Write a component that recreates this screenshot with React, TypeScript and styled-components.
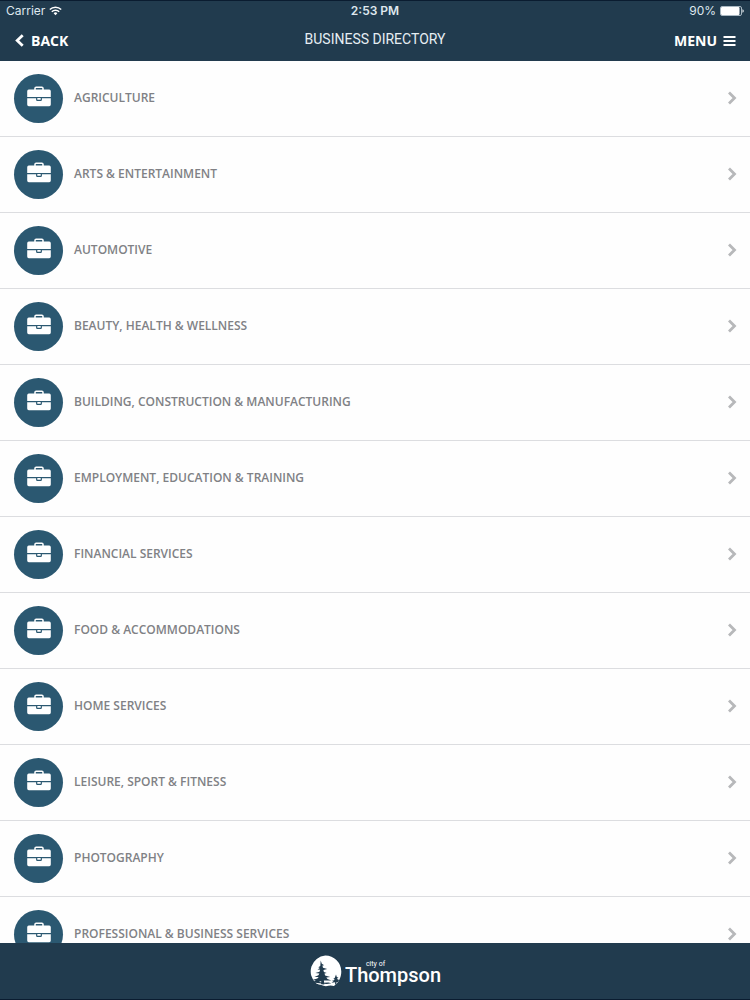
import React from "react";
import styled, { createGlobalStyle } from "styled-components";

const navy = "#213b4e";
const edge = "#0a1c30";

const GlobalStyle = createGlobalStyle`
  *, *::before, *::after { box-sizing: border-box; }
  body { margin: 0; background: #fefefe; font-family: "Open Sans", sans-serif; }
`;

const Screen = styled.div`
  display: flex;
  flex-direction: column;
  height: 100vh;
`;

const Header = styled.header`
  flex: none;
  background: ${navy};
  border-top: 1px solid ${edge};
  color: #fff;
`;

const StatusBar = styled.div`
  display: grid;
  grid-template-columns: 1fr auto 1fr;
  align-items: center;
  height: 20px;
  padding: 0 6px;
  font: 400 12px/20px Inter, sans-serif;
  color: #dfe8ee;
`;

const Cell = styled.div<{ $end?: boolean }>`
  display: flex;
  align-items: center;
  justify-content: ${(p) => (p.$end ? "flex-end" : "flex-start")};
  gap: 4px;
`;

const Clock = styled.time`
  font-weight: 600;
`;

const NavBar = styled.nav`
  display: grid;
  grid-template-columns: 1fr auto 1fr;
  height: 40px;
  padding: 0 14px;
`;

const NavButton = styled.button<{ $end?: boolean }>`
  display: flex;
  align-items: center;
  justify-self: ${(p) => (p.$end ? "end" : "start")};
  gap: 6px;
  height: 40px;
  padding: 0;
  border: 0;
  background: none;
  color: #fff;
  font: 700 14px/40px "Open Sans", sans-serif;
  cursor: pointer;
`;

const Title = styled.h1`
  margin: 0;
  font: 400 14px/36px Roboto, sans-serif;
  color: #e6eef3;
`;

const List = styled.ul`
  flex: 1;
  min-height: 0;
  margin: 0;
  padding: 0;
  overflow-y: auto;
  scrollbar-width: none;
  list-style: none;
`;

const Row = styled.li`
  border-bottom: 1px solid #dcdde0;
`;

const RowLink = styled.a`
  display: flex;
  align-items: center;
  gap: 11px;
  height: 75px;
  padding: 0 13px 0 14px;
  color: #808185;
  font-size: 12px;
  font-weight: 600;
  line-height: 18px;
  text-decoration: none;
`;

const Badge = styled.span`
  display: grid;
  flex: none;
  place-items: center;
  width: 49px;
  height: 49px;
  padding-bottom: 3px;
  border-radius: 50%;
  background: #2b5871;
`;

const Label = styled.span`
  flex: 1;
  padding-bottom: 2px;
`;

const Footer = styled.footer`
  display: flex;
  flex: none;
  align-items: center;
  justify-content: center;
  gap: 3px;
  height: 57px;
  background: ${navy};
  border-bottom: 1px solid ${edge};
  color: #fff;
`;

const Wordmark = styled.div`
  display: flex;
  flex-direction: column;
  font-family: Roboto, sans-serif;
`;

const Small = styled.span`
  padding-left: 21px;
  font-size: 7px;
  line-height: 8px;
`;

const Name = styled.span`
  font-size: 20px;
  font-weight: 500;
  line-height: 14px;
`;

const WifiIcon = () => (
  <svg width="13" height="10" viewBox="0 0 13 10" fill="none" stroke="#fff" strokeWidth="1.5" aria-hidden="true">
    <path d="M.8 3.5a8.1 8.1 0 0 1 11.4 0M2.8 5.7a5.2 5.2 0 0 1 7.4 0" />
    <path d="M6.5 9.2 4.6 7.3a2.7 2.7 0 0 1 3.8 0z" fill="#fff" stroke="none" />
  </svg>
);

const BatteryIcon = () => (
  <svg width="24" height="10" viewBox="0 0 24 10" aria-hidden="true">
    <rect x=".5" y=".5" width="21" height="9" rx="1.5" fill="none" stroke="#a9b8c2" />
    <rect x="1" y="1" width="18.5" height="8" rx="1" fill="#fff" />
    <path d="M22.5 3.2c1.6.5 1.6 3.1 0 3.6z" fill="#fff" />
  </svg>
);

const BackIcon = () => (
  <svg width="11" height="14" viewBox="0 0 11 14" fill="none" stroke="#fff" strokeWidth="2.8" aria-hidden="true">
    <path d="M8.7 1.2 3.2 6.5l5.5 5.3" />
  </svg>
);

const MenuIcon = () => (
  <svg width="13" height="12" viewBox="0 0 13 12" fill="#fff" aria-hidden="true">
    <path d="M.5 1h12v2H.5zM.5 5h12v2H.5zM.5 9h12v2H.5z" />
  </svg>
);

const ChevronIcon = () => (
  <svg width="10" height="16" viewBox="0 0 10 16" fill="none" stroke="#b7b8ba" strokeWidth="2.8" aria-hidden="true">
    <path d="m2 1.5 5.5 5.5L2 12.5" />
  </svg>
);

const BriefcaseIcon = () => (
  <svg width="24" height="22" viewBox="0 0 24 22" aria-hidden="true">
    <path d="M8 4.5V2.3Q8 1.2 9.1 1.2h5.8Q16 1.2 16 2.3V4.5" fill="none" stroke="#fff" strokeWidth="1.5" />
    <path d="M1.8 3.6h20.4q1.6 0 1.6 1.6v5.9H.2V5.2q0-1.6 1.6-1.6z" fill="#fff" />
    <path d="M.2 12.2h8.9v1.6q0 1.2 1.2 1.2h3.4q1.2 0 1.2-1.2v-1.6h8.9v6.4q0 1.6-1.6 1.6H1.8q-1.6 0-1.6-1.6z" fill="#fff" />
    <path d="M10.3 12.1h3.4v1.7h-3.4z" fill="#fff" />
  </svg>
);

const TreeLogo = () => (
  <svg width="33" height="33" viewBox="0 0 33 33" aria-hidden="true">
    <path d="M16.3.5a16 16 0 0 1 16 16c0 6.300-3 11.600-7.400 14.600-2.600-1-5-.6-8 .2-3-.6-6-1.400-9.600-2.700A16 16 0 0 1 16.3.5z" fill="#fff" />
    <path
      d="M11.700 5.600l1.100 3.100 2.400 1.500-1.800.3.600 2.200 4.200 1.200-3.800 1.100.5 2 2.800 1-2.200.6.600 1.800 5.200 1.500-4 .7 1.200 1.300 3.800 1.500-7.400.2.400 3.900-3.200-.2.100-3.200-3.600 1.300-5.300.5 3.400-2.400-3.400-.4 5-1.700 1.400-1.400-4.300.1 4-1.900 1-1.700-4-.4 4.100-1.400.6-2-2.600-.1 2.400-1.600-1.600-.7 2-1.400z"
      fill={navy}
    />
    <path
      d="M27 19.600l.8 2.500 1.800.6-1.500.5.6 1.400 2.700.7-2.500.7.5 1.100-2 .1.100 2.200-1.400.1v-2.200l-3.600.5 2.100-1.600-2-.2 2.400-.8.6-1.200-1.500-.2 1.600-.9z"
      fill={navy}
    />
    <path d="M4 26.600l6.300.4 4.200.8 5-.3 2.800.7-4.500.7-4.900-.4-4.600-.5z" fill={navy} />
  </svg>
);

const categories = [
  "Agriculture",
  "Arts & Entertainment",
  "Automotive",
  "Beauty, Health & Wellness",
  "Building, Construction & Manufacturing",
  "Employment, Education & Training",
  "Financial Services",
  "Food & Accommodations",
  "Home Services",
  "Leisure, Sport & Fitness",
  "Photography",
  "Professional & Business Services",
].map((name) => name.toUpperCase());

export default function App() {
  return (
    <Screen>
      <GlobalStyle />
      <Header>
        <StatusBar>
          <Cell>
            Carrier <WifiIcon />
          </Cell>
          <Clock>2:53 PM</Clock>
          <Cell $end>
            90% <BatteryIcon />
          </Cell>
        </StatusBar>
        <NavBar>
          <NavButton type="button">
            <BackIcon />
            BACK
          </NavButton>
          <Title>BUSINESS DIRECTORY</Title>
          <NavButton type="button" $end>
            MENU
            <MenuIcon />
          </NavButton>
        </NavBar>
      </Header>
      <List>
        {categories.map((name) => (
          <Row key={name}>
            <RowLink href="#">
              <Badge>
                <BriefcaseIcon />
              </Badge>
              <Label>{name}</Label>
              <ChevronIcon />
            </RowLink>
          </Row>
        ))}
      </List>
      <Footer>
        <TreeLogo />
        <Wordmark>
          <Small>city of</Small>
          <Name>Thompson</Name>
        </Wordmark>
      </Footer>
    </Screen>
  );
}
